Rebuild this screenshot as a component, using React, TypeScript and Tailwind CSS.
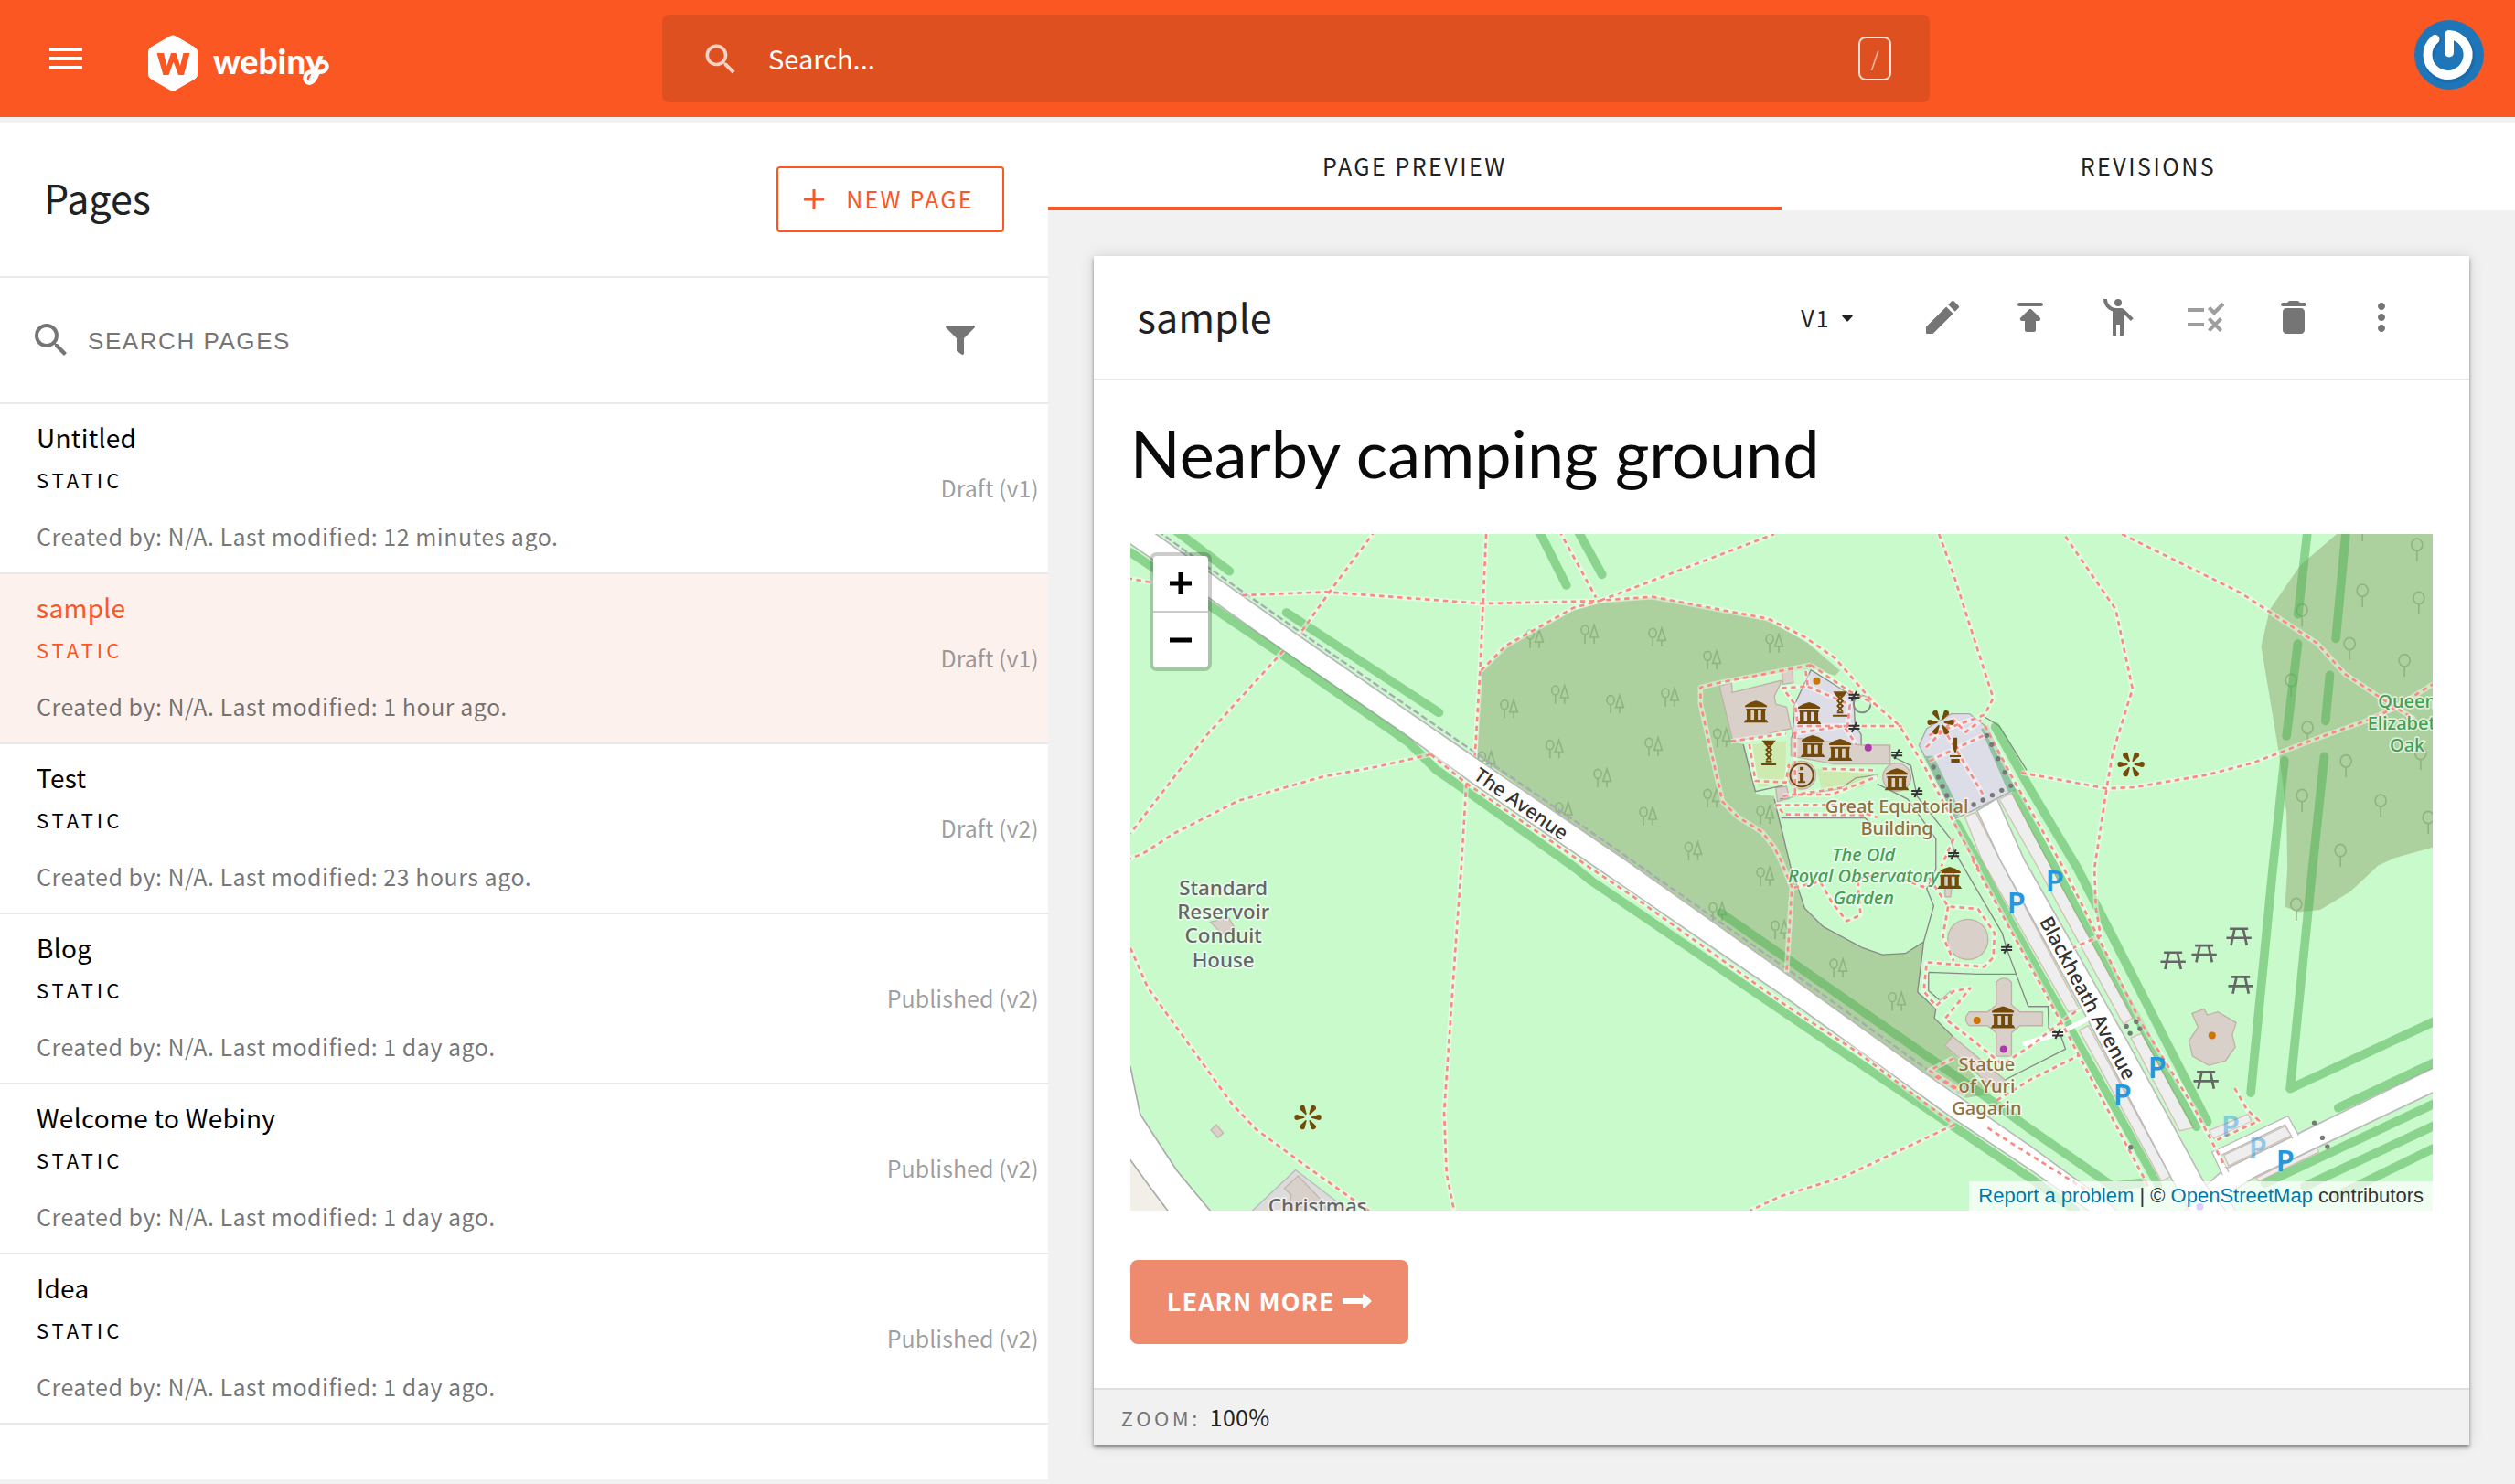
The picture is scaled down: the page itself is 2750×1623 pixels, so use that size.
import React, { useState } from "react";
import { MdMenu, MdSearch, MdEmojiPeople, MdRule, MdMoreVert } from "react-icons/md";
import { FaFilter } from "react-icons/fa";

type Page = { title: string; modified: string; status: string };

const pages: Page[] = [
  { title: "Untitled", modified: "12 minutes ago", status: "Draft (v1)" },
  { title: "sample", modified: "1 hour ago", status: "Draft (v1)" },
  { title: "Test", modified: "23 hours ago", status: "Draft (v2)" },
  { title: "Blog", modified: "1 day ago", status: "Published (v2)" },
  { title: "Welcome to Webiny", modified: "1 day ago", status: "Published (v2)" },
  { title: "Idea", modified: "1 day ago", status: "Published (v2)" },
];

function Logo() {
  return (
    <svg viewBox="0 0 200 64" className="h-16 w-[200px]" role="img" aria-label="webiny">
      <path
        d="M24.500 1.600Q27 .2 29.500 1.600L51 14Q53.500 15.500 53.500 18.500V43.500Q53.500 46.500 51 48L29.500 60.400Q27 61.800 24.500 60.400L3 48Q.5 46.500 .5 43.500V18.500Q.5 15.500 3 14Z"
        fill="#fff"
        stroke="#fff"
      />
      <path d="M9.500 20H17L20.500 34 25 20H30.500L35 34 38.500 20H45.500L39 44H33L27.700 29.500 22.500 44H16.500Z" fill="#fa5723" />
      <text x="71" y="43" fill="#fff" fontSize="37" fontWeight="900" fontFamily="Lato, sans-serif">
        webiny
      </text>
      <path
        d="M183 40.500q-8 -1 -10.500 3.500c-3 6 2 10 6 8 4-2 5-6 7.500-11.500 3 .5 9 0 9.500-6 0-4-4-5.500-7-4.500"
        fill="none"
        stroke="#fff"
        strokeWidth="4.500"
        strokeLinecap="round"
      />
    </svg>
  );
}

function Avatar() {
  return (
    <svg viewBox="0 0 76 76" className="size-[76px]" aria-hidden="true">
      <circle cx="38" cy="38" r="38" fill="#1e76b9" />
      <path d="M22.500 20.500a22.500 22.500 0 1 0 17-5" fill="none" stroke="#15609b" strokeWidth="12" strokeLinecap="round" transform="translate(1 2)" opacity=".5" />
      <path d="M22.500 21a22 22 0 1 0 15.500-5V35.500" fill="none" stroke="#fff" strokeWidth="10" strokeLinecap="round" strokeLinejoin="round" />
    </svg>
  );
}

const roundIcons = {
  edit: "M3 17.460v3.040c0 .28.22.5.5.5h3.040c.13 0 .26-.05.35-.15L17.810 9.940l-3.750-3.750L3.150 17.100c-.1.1-.15.22-.15.36zM20.710 7.040c.39-.39.39-1.020 0-1.410l-2.340-2.340c-.39-.39-1.020-.39-1.410 0l-1.830 1.830 3.750 3.750 1.830-1.830z",
  publish:
    "M5 5c0 .55.45 1 1 1h12c.55 0 1-.45 1-1s-.45-1-1-1H6c-.55 0-1 .45-1 1zm2.410 9H9v5c0 .55.45 1 1 1h4c.55 0 1-.45 1-1v-5h1.590c.89 0 1.340-1.080.71-1.710L12.710 7.700c-.39-.39-1.020-.39-1.410 0l-4.600 4.590c-.63.63-.19 1.710.71 1.710z",
  remove:
    "M6 19c0 1.100.9 2 2 2h8c1.100 0 2-.9 2-2V9c0-1.100-.9-2-2-2H8c-1.100 0-2 .9-2 2v10zM18 4h-2.500l-.71-.71c-.18-.18-.44-.29-.7-.29H9.910c-.26 0-.52.11-.7.29L8.500 4H6c-.55 0-1 .45-1 1s.45 1 1 1h12c.55 0 1-.45 1-1s-.45-1-1-1z",
};

function RoundIcon({ d }: { d: string }) {
  return (
    <svg viewBox="0 0 24 24" className="size-12" fill="currentColor" aria-hidden="true">
      <path d={d} />
    </svg>
  );
}

function ToolButton({ label, faded, children }: { label: string; faded?: boolean; children: React.ReactNode }) {
  return (
    <button aria-label={label} className={faded ? "flex size-24 items-center justify-center text-[#757575] opacity-70" : "flex size-24 items-center justify-center text-[#757575]"}>
      {children}
    </button>
  );
}

/* Footways: pale casing below, red dashes above. */
const footways = [
  "M802-10 662 178 552 333",
  "M502 383 252 658 112 838 0 983",
  "M-10 145 75 160",
  "M367 201 642 190 1152 228 1522 220",
  "M1167 0 1147 448 1130 728",
  "M1407-10 1527 208",
  "M1150 448 1232 366 1452 243 1542 218 1712 206 2092 278 2212 338 2312 408 2442 558 2522 628 2602 758 2702 948 2782 1098",
  "M1542 218 2112 0",
  "M985 723 812 763 632 796 352 876 142 983 42 1048-10 1068",
  "M985 723 1102 818 1512 1098 1650 1190 2152 1548 2382 1698 2702 1938",
  "M1102 818 1085 1098 1067 1348 1029 1898 1037 2098 1062 2220",
  "M0 1358 57 1488 332 1868 412 1953 582 2078 782 2220",
  "M2702 1938 2342 2108 2132 2173 2032 2220",
  "M2652 0 2692 108 2772 358 2830 538 2802 593 2762 608 2620 660",
  "M2232 430 1932 488 1870 503 1870 558 1942 878 1992 928 2072 978 2112 1028 2132 1068 2170 1158 2152 1438",
  "M2232 430 2362 518 2442 558",
  "M3067 8 3232 248 3287 508 3222 718 3202 835 3162 1098 3167 1228 3182 1318 3092 1358",
  "M3252 0 3642 193 3892 358 3982 458 4102 538 4212 608",
  "M2922 783 3202 835 3292 831 3532 790 3682 751 3872 678 4052 613 4142 573 4272 493",
  "M2802 628 2892 798 3062 1098 3312 1598 3492 1888 3592 2078",
  "M2762 1068 2892 1308 3062 1618 3322 2108 3342 2148",
  "M2812 1948 2892 2000 3132 2150",
  "M2177 1160 2262 1140 2302 1210 2350 1270 2395 1250 2385 1130 2480 1110 2600 1158 2610 1140",
  "M2620 1128 2682 1222 2780 1230 2835 1310 2830 1390 2800 1420 2612 1405 2602 1500 2642 1548 2700 1500 2755 1490 2672 1590 2772 1668 2860 1740 2952 1680 3042 1610 3112 1558",
  "M2682 1222 2665 1320 2700 1400",
  "M2842 1858 2952 1790 3112 1710",
  "M2700 1720 2620 1760 2712 1820M2640 1780l100 60",
  "M2170 655 2340 630 2380 690M2180 655l0 200 120 0 150-60",
  "M1970 680 2150 655M2030 690l20 120 100 5 10-60",
  "M2140 915 2120 890 2330 888 2450 930M2150 920 2420 922",
  "M2215 450 2222 500 2140 505 2180 560 2190 630 2530 630",
  "M2222 500 2360 560 2350 650",
  "M2270 770 2440 775M2140 860 2250 845 2350 830",
  "M2610 700 2700 610 2740 650 2790 610M2620 745l180-85M2680 660l120 200",
  "M2700 1000 2660 1090",
  "M3622 1818 3662 1888 3702 1925 3560 1990",
];

const hedges = [
  "M0 60 272 243 502 398 912 683 1002 773 1082 828 1462 1098 1512 1138 2372 1723 2952 2113 3100 2220",
  "M150-10 325 122",
  "M512 258 1012 586",
  "M1335-20 1430 168",
  "M1462-20 1547 133",
  "M1937 1243 2822 1858 2952 1953 3222 2140 3322 2128",
  "M3862-20 3830 263",
  "M3829 360 3792 663",
  "M3785 743 3747 1098 3675 1833",
  "M3988-20 3954 343",
  "M3934 463 3920 613",
  "M3916 730 3877 1098 3804 1820 4300 1588",
  "M3962 1883 4300 1723",
  "M3722 2130 4300 1858",
  "M3852 2140 4300 1930",
  "M3960 2170 4300 2003",
  "M2837 633 2952 838 3107 1098 3532 1928",
];

const grove: [number, number][] = [
  [1326, 330], [1506, 315], [1409, 513], [1242, 560], [1391, 692], [1168, 730], [1421, 897], [1728, 325], [1908, 400], [2112, 345], [1590, 545], [1770, 522], [1716, 685], [1548, 787], [1698, 912],
  [1846, 1027], [2082, 908], [2082, 1110], [1940, 655], [1908, 853], [1926, 1225], [2130, 1285], [2322, 1410], [2514, 1520],
];

const loneTrees: [number, number][] = [
  [4220, 35], [4041, 185], [4226, 210], [3843, 250], [3999, 360], [4179, 415], [3807, 480], [3861, 635], [3987, 745], [3843, 858], [4101, 875], [4257, 930], [3969, 1038], [4041, -30], [4232, 720], [3824, 1215],
];

const museums: [number, number][] = [[2052, 585], [2226, 590], [2238, 698], [2328, 710], [2514, 807], [2687, 1130], [2862, 1587]];
const picnics: [number, number][] = [[3420, 1398], [3522, 1375], [3636, 1320], [3642, 1478], [3528, 1790]];
const gates: [number, number][] = [[2374, 532], [2374, 634], [2514, 722], [2580, 848], [2700, 1052], [2874, 1360], [3042, 1640]];
const bollards: [number, number][] = [
  [2634, 765], [2650, 798], [2664, 828], [2678, 858], [2766, 888], [2796, 873], [2827, 857], [2858, 841], [2888, 826], [2868, 782], [2846, 737], [2825, 691], [2809, 661],
  [3267, 1615], [3299, 1600], [3311, 1623], [3279, 1638], [3281, 2012], [3883, 1932], [3910, 1981], [3926, 2010],
];

function MapLabel({ x, y, lines, size, step, fill, italic }: { x: number; y: number; lines: string[]; size: number; step: number; fill: string; italic?: boolean }) {
  return (
    <text
      fontFamily="'Noto Sans', sans-serif"
      fontSize={size}
      fontStyle={italic ? "italic" : "normal"}
      fontWeight="500"
      fill={fill}
      stroke="#fff"
      strokeOpacity=".6"
      strokeWidth="10"
      strokeLinejoin="round"
      paintOrder="stroke"
      textAnchor="middle"
    >
      {lines.map((line, i) => (
        <tspan key={line} x={x} y={y + i * step}>
          {line}
        </tspan>
      ))}
    </text>
  );
}

function ParkMap() {
  return (
    <svg viewBox="0 0 4272 2220" className="block h-auto w-full" role="img" aria-label="Map of the park around the Royal Observatory">
      <defs>
        <g id="round-tree" fill="none" stroke="#8fb481" strokeWidth="5">
          <ellipse cx="0" cy="0" rx="18" ry="20" />
          <path d="M0 20V54" />
        </g>
        <g id="tree-pair" fill="none" stroke="#8fb481" strokeWidth="5">
          <ellipse cx="-15" cy="0" rx="12" ry="15" />
          <path d="M-15 15V44M15-16 2 24H28ZM15 24V44" />
        </g>
        <g id="museum" fill="#734a08">
          <path d="M-36-22Q-20-34 0-38 20-34 36-22V-17H-36ZM-32-12H32V-6H-32ZM-30-6H-17V26H-30ZM-6-6H6V26H-6ZM17-6H30V26H17ZM-34 24H34L40 34H-40Z" />
        </g>
        <g id="picnic" fill="none" stroke="#666" strokeWidth="8">
          <path d="M-30-25H30M-41 5H41M-14-25-26 30M14-25 26 30" />
        </g>
        <g id="gate" fill="none" stroke="#333" strokeWidth="6">
          <path d="M-18-5H18M-18 5H18M-8 16 8-16" />
        </g>
        <g id="artwork" fill="#734a08">
          <path id="petal" d="M11-2 36-9Q44-9 44 0 44 9 36 9L11 2Z" />
          <use href="#petal" transform="rotate(60)" />
          <use href="#petal" transform="rotate(120)" />
          <use href="#petal" transform="rotate(180)" />
          <use href="#petal" transform="rotate(240)" />
          <use href="#petal" transform="rotate(300)" />
        </g>
        <g id="telescope" fill="none" stroke="#734a08" strokeWidth="6">
          <path d="M-17-38H17L10-28H-10ZM-10 28H10" fill="#734a08" />
          <path d="M-8-26 8-10-8 6 8 24M8-26-8-10 8 6-8 24M-24 38H24" />
        </g>
      </defs>

      <rect width="4272" height="2220" fill="#c8facc" />

      {/* Woodland */}
      <path
        d="M1150 453 1232 368 1452 250 1542 226 1722 206 2092 283 2222 358 2327 448 2312 465 2232 440 1932 488 1977 680 2012 690 2052 853 2112 860 2167 1098 2192 1168 2212 1228 2272 1288 2402 1358 2467 1380 2542 1376 2602 1338 2582 1503 2642 1558 2637 1588 2697 1648 2672 1678 2742 1748 2822 1838 2740 1850 2612 1773 2152 1443 1542 1018 1137 728Z"
        fill="#add19e"
      />
      <path d="M3957 0 3837 103 3737 248 3709 368 3767 718 3792 918 3795 1098 3787 1223 3832 1240 3902 1233 4002 1173 4092 1088 4147 1063 4272 1028V0Z" fill="#add19e" />
      {grove.map(([x, y]) => (
        <use key={`${x}-${y}`} href="#tree-pair" x={x} y={y} />
      ))}
      {loneTrees.map(([x, y]) => (
        <use key={`${x}-${y}`} href="#round-tree" x={x} y={y} />
      ))}

      {/* South-west corner */}
      <path d="M0 1748 32 1903 152 2088 270 2230H-10V1748Z" fill="#fff" stroke="#aaa" strokeWidth="5" />
      <path d="M-10 2040 72 2153 130 2230H-10Z" fill="#f2efe9" stroke="#aaa" strokeWidth="5" />
      <path d="M542 2086 722 2225H395Z" fill="#dcdcdc" stroke="#bbb" strokeWidth="4" />
      <path d="M550 2106 640 2200V2225H520L527 2168 505 2146ZM262 1273 322 1258 342 1293 302 1313ZM282 1938 305 1965 287 1981 264 1956Z" fill="#d9d0c9" stroke="#c4b6ab" strokeWidth="4" />

      {/* Courtyards and lawns */}
      <path d="M2177 563 2232 446 2372 533 2377 628 2397 658V693H2167L2177 600Z" fill="#dddde8" stroke="#8a8a8a" strokeWidth="4" />
      <path d="M2587 693 2612 638 2692 590H2752L2802 628 2902 838 2762 908 2707 933Z" fill="#dddde8" stroke="#aaa" strokeWidth="4" />
      <path d="M2602 728H2634L2724 915 2707 933ZM2790 640 2812 628 2905 840 2880 848Z" fill="#8fc3a1" />
      <path d="M2040 690 2150 680 2150 820 2060 830ZM2250 770 2440 790 2400 830 2270 850Z" fill="#cdebb0" />

      {/* Buildings */}
      <g fill="#d9d0c9" stroke="#c1b2a6" strokeWidth="4">
        <path d="M1932 498 1972 488 1974 520 2137 480 2112 533 2117 558 2152 568 2167 638 1977 683ZM2137 453 2172 448 2174 488 2140 493ZM2167 668 2397 693H2492V755H2307L2167 728ZM2117 833 2152 828 2162 868 2122 878Z" />
        <circle cx="2514" cy="798" r="46" />
        <circle cx="2202" cy="791" r="46" />
        <circle cx="2747" cy="1330" r="66" />
        <path d="M2672 1110H2702L2690 1190H2672Z" />
        <path d="M2840 1470Q2865 1445 2890 1470V1545L2918 1568H2992V1613H2918L2890 1636V1713H2840V1636L2812 1613H2752Q2728 1590 2752 1568H2812L2840 1545Z" />
        <path d="M2697 1648 2672 1678 2842 1828 2870 1792Z" />
        <path d="M3482 1573 3522 1558 3532 1578 3567 1568 3627 1603 3614 1643 3624 1683 3592 1728 3537 1743 3484 1713 3472 1663 3502 1618Z" />
      </g>

      {/* Fences and walls */}
      <g fill="none" stroke="#888" strokeWidth="4">
        <path d="M2010 690 2050 845 2140 825M2112 870 2167 1098 2192 1168 2212 1228 2272 1288 2402 1358 2467 1380 2542 1376 2602 1338 2635 1220 2612 1165 2642 1100V1000L2550 870 2450 820" />
        <path d="M2602 1338 2582 1503 2642 1558 2637 1588 2697 1648M2618 1438 2780 1444H2905M2618 1438V1498L2655 1530 2692 1498M2135 932H2410L2430 950" />
        <path d="M2500 730 2560 760 2580 860 2690 1000 2702 1040 2860 1310 2874 1360 2945 1550H3010L3012 1620 3050 1640 3067 1690 2870 1790" />
        <path d="M2802 600 2850 630 2940 775" />
      </g>
      <path d="M2130 870 2330 835 2380 800 2450 790" fill="none" stroke="#999" strokeWidth="4" />
      <circle cx="2400" cy="558" r="28" fill="none" stroke="#888" strokeWidth="6" />

      {/* Parking strips */}
      <g fill="#eee" stroke="#d5bfb8" strokeWidth="4">
        <path d="M2850 870 2890 850 3007 1068 3287 1588 3257 1608 2962 1068ZM3282 1653 3317 1638 3487 1948 3442 1958Z" />
        <path d="M2737 928 2772 913 2852 1068 3112 1558 3077 1568 2792 1068ZM3112 1628 3142 1613 3412 2108 3382 2123Z" />
        <path d="M3537 1958 3667 1903 3677 1928 3552 1983ZM3692 2113 3892 2013 3897 2028 3702 2123Z" />
      </g>

      {/* Hedges beside Blackheath Avenue */}
      <g fill="none" stroke="#4bae4f" strokeOpacity=".5" strokeWidth="26" strokeLinecap="round">
        <path d="M2712 950 2800 1110 2892 1280 3372 2138" />
        <path d="M2905 850 2992 1018 3497 1946" />
      </g>

      {/* Roads */}
      <path d="M3512 2153 3582 2088 4290 1744V1824L3692 2108 3592 2168 3632 2230H3452Z" fill="#fff" stroke="#bbb" strokeWidth="5" />
      <path d="M2777 908 2842 868 2932 1068 3272 1668 3522 2128 3600 2230H3480L3422 2128 3132 1578 2852 1068Z" fill="#fff" stroke="#bbb" strokeWidth="5" />
      <path d="M3592 2098 3562 2033 3792 1924 3822 1978" fill="none" stroke="#bbb" strokeWidth="26" />
      <path d="M3594 2102 3562 2033 3792 1924 3824 1982" fill="none" stroke="#fff" strokeWidth="18" />
      <path d="M3587 2038 3787 1943 3807 1973 3602 2073Z" fill="#eee" stroke="#d5bfb8" strokeWidth="4" />
      <path d="M3140 1590 3042 1640 2935 1672" fill="none" stroke="#fff" strokeWidth="16" strokeLinecap="round" />
      <path
        d="M-10 26 262 213 502 383 902 658 1122 818 1522 1091 2152 1523 2692 1913 2952 2086 3150 2225H3240L3212 2198 2952 2008 2612 1773 2152 1443 1622 1068 1542 1014 1112 720 832 528 552 333 262 128 70-10H-10Z"
        fill="#fff"
        stroke="#b8b8b8"
        strokeWidth="5"
      />
      <path d="M90-10 270 120 552 318 838 516 1118 708 1548 1003 2158 1430 2618 1760 2720 1835" fill="none" stroke="#a9a9b4" strokeWidth="7" strokeDasharray="22 10" />

      <g fill="none" stroke="#4bae4f" strokeOpacity=".5" strokeWidth="29" strokeLinecap="round" strokeLinejoin="round">
        {hedges.map((d) => (
          <path key={d} d={d} />
        ))}
      </g>

      <g fill="none" stroke="#fff" strokeOpacity=".45" strokeWidth="17" strokeLinejoin="round">
        {footways.map((d) => (
          <path key={d} d={d} />
        ))}
      </g>
      <g fill="none" stroke="#fa8b80" strokeWidth="8" strokeLinejoin="round" strokeDasharray="16 14">
        {footways.map((d) => (
          <path key={d} d={d} />
        ))}
      </g>

      {/* Points of interest */}
      {museums.map(([x, y]) => (
        <use key={`${x}-${y}`} href="#museum" x={x} y={y} />
      ))}
      {picnics.map(([x, y]) => (
        <use key={`${x}-${y}`} href="#picnic" x={x} y={y} />
      ))}
      {gates.map(([x, y]) => (
        <use key={`${x}-${y}`} href="#gate" x={x} y={y} />
      ))}
      {bollards.map(([x, y]) => (
        <circle key={`${x}-${y}`} cx={x} cy={y} r="8" fill="#777" />
      ))}
      <use href="#artwork" x="582" y="1914" />
      <use href="#artwork" x="3282" y="756" />
      <use href="#artwork" x="2658" y="618" />
      <use href="#telescope" x="2328" y="558" />
      <use href="#telescope" x="2094" y="718" />
      <path d="M2700 668H2712V700L2708 716H2703L2698 700ZM2688 726H2724V732H2688ZM2692 738H2720V750H2692Z" fill="#734a08" />
      <circle cx="2202" cy="791" r="38" fill="none" stroke="#734a08" strokeWidth="6" />
      <path d="M2196 764h12v11h-12ZM2192 783h16v28h6v6h-24v-6h6v-22h-4Z" fill="#734a08" />
      <circle cx="2251" cy="482" r="12" fill="#cc7300" />
      <circle cx="2777" cy="1596" r="12" fill="#cc7300" />
      <circle cx="3548" cy="1645" r="12" fill="#cc7300" />
      <circle cx="2420" cy="701" r="12" fill="#ac39ac" />
      <circle cx="2864" cy="1690" r="12" fill="#ac39ac" />
      <circle cx="3508" cy="2207" r="12" fill="#8461ff" />

      <g fontFamily="'Noto Sans', sans-serif" fontSize="98" fontWeight="600" fill="#2498dd" textAnchor="middle">
        <text x="3032" y="1173">P</text>
        <text x="2906" y="1245">P</text>
        <text x="3368" y="1785">P</text>
        <text x="3254" y="1875">P</text>
        <text x="3788" y="2091">P</text>
        <text x="3608" y="1977" fillOpacity=".45">P</text>
        <text x="3698" y="2050" fillOpacity=".45">P</text>
      </g>

      {/* Labels */}
      <MapLabel x={305} y={1184} lines={["Standard", "Reservoir", "Conduit", "House"]} size={67} step={79} fill="#666" />
      <MapLabel x={614} y={2228} lines={["Christmas"]} size={67} step={79} fill="#666" />
      <MapLabel x={2514} y={915} lines={["Great Equatorial", "Building"]} size={60} step={72} fill="#94703b" />
      <MapLabel x={2809} y={1760} lines={["Statue", "of Yuri", "Gagarin"]} size={60} step={72} fill="#94703b" />
      <MapLabel x={2405} y={1073} lines={["The Old", "Royal Observatory", "Garden"]} size={60} step={71} fill="#43a055" italic />
      <MapLabel x={4188} y={570} lines={["Queen", "Elizabeth", "Oak"]} size={60} step={72} fill="#43a055" />
      <g fontFamily="'Noto Sans', sans-serif" fill="#333" fontWeight="500">
        <text transform="translate(1122 801) rotate(35)" fontSize="64">
          The Avenue
        </text>
        <text transform="translate(2980 1270) rotate(62)" fontSize="65">
          Blackheath Avenue
        </text>
      </g>
    </svg>
  );
}

function ZoomGlyph({ plus }: { plus?: boolean }) {
  return (
    <svg viewBox="0 0 24 24" className="size-6" stroke="#000" strokeWidth="5" aria-hidden="true">
      <path d={plus ? "M0 12H24M12 0V24" : "M0 12H24"} />
    </svg>
  );
}

export default function App() {
  const [selected, setSelected] = useState("sample");
  const [tab, setTab] = useState("Page preview");

  return (
    <div className="flex min-h-screen flex-col bg-[#f1f1f1] font-['Noto_Sans_CJK_SC',sans-serif] text-[#212121]">
      <header className="flex h-32 items-center bg-[#fa5723] text-white">
        <div className="flex w-[26.33%] items-center pl-12">
          <button aria-label="Open menu" className="mr-[66px]">
            <MdMenu className="size-12" />
          </button>
          <a href="#home" aria-label="Webiny home" className="mt-3">
            <Logo />
          </a>
        </div>
        <label className="flex h-24 w-[50.4%] items-center rounded-lg bg-[#df5020] pr-[42px] pl-[42px]">
          <MdSearch className="mt-0.5 size-11 text-white/75" />
          <input aria-label="Search" placeholder="Search..." className="ml-[30px] h-16 min-w-0 flex-1 bg-transparent pb-0.5 text-[29px] outline-none placeholder:text-white" />
          <kbd className="flex h-12 w-9 items-center justify-center rounded-lg border-2 border-white/80 pb-0.5 font-['Noto_Sans_CJK_SC',sans-serif] text-[22px] font-light text-white/80">/</kbd>
        </label>
        <button aria-label="Account" className="mr-[34px] mb-2 ml-auto">
          <Avatar />
        </button>
      </header>

      <main className="grid flex-1 grid-cols-12 pt-1.5">
        <section className="col-span-5 mb-[5px] bg-white">
          <div className="flex h-[170px] items-center justify-between border-b-2 border-[#e9e9e9] px-12">
            <h1 className="pb-1.5 text-[43px] leading-none">Pages</h1>
            <button className="flex h-[72px] items-center rounded border-2 border-[#fa5723] pr-[31px] pl-7 text-[25px] tracking-[0.09em] text-[#fa5723] uppercase">
              <svg viewBox="0 0 22 22" className="mr-6 size-[22px]" stroke="currentColor" strokeWidth="3" aria-hidden="true">
                <path d="M0 11H22M11 0V22" />
              </svg>
              New page
            </button>
          </div>
          <div className="flex h-[138px] items-center border-b-2 border-[#e9e9e9] pr-20 pl-8">
            <MdSearch className="size-12 text-[#757575]" />
            <input
              aria-label="Search pages"
              placeholder="SEARCH PAGES"
              className="ml-4 min-w-0 flex-1 bg-transparent pt-0.5 font-['Liberation_Sans',sans-serif] text-[26px] tracking-[0.06em] outline-none placeholder:text-[#757575]"
            />
            <button aria-label="Filter">
              <FaFilter className="size-8 text-[#757575]" />
            </button>
          </div>
          <ul>
            {pages.map((page) => {
              const active = page.title === selected;
              return (
                <li key={page.title} className="border-b-2 border-[#e9e9e9]">
                  <button onClick={() => setSelected(page.title)} className={active ? "flex w-full items-center bg-[#fdf1ed] pr-2.5 pl-10 text-left" : "flex w-full items-center pr-2.5 pl-10 text-left"}>
                    <span className="flex-1 pt-4 pb-6">
                      <span className={active ? "block text-[#fa5723]" : "block text-black"}>
                        <span className="block text-[28px] leading-10 tracking-[0.01em]">{page.title}</span>
                        <span className="mt-2.5 block text-[22px] leading-8 tracking-[0.18em]">STATIC</span>
                      </span>
                      <span className="mt-[30px] block text-[25px] leading-8 tracking-[0.02em] text-black/55">Created by: N/A. Last modified: {page.modified}.</span>
                    </span>
                    <span className="pb-0.5 text-[25px] leading-8 text-black/40">{page.status}</span>
                  </button>
                </li>
              );
            })}
          </ul>
        </section>

        <section className="col-span-7">
          <div role="tablist" className="flex bg-white">
            {["Page preview", "Revisions"].map((name) => (
              <button
                key={name}
                role="tab"
                aria-selected={tab === name}
                onClick={() => setTab(name)}
                className={
                  tab === name
                    ? "h-24 flex-1 border-b-4 border-[#fa5723] pt-1 text-[25px] tracking-[0.1em] uppercase"
                    : "h-24 flex-1 border-b-4 border-white pt-1 text-[25px] tracking-[0.1em] uppercase"
                }
              >
                {name}
              </button>
            ))}
          </div>

          <article className="mx-[50px] mt-[50px] mb-8 bg-white shadow-[0_3px_4px_rgba(0,0,0,0.4),0_0_16px_rgba(0,0,0,0.12)]">
            <div className="flex h-[136px] items-center border-b-2 border-[#e9e9e9] pr-12 pl-12">
              <h2 className="flex-1 pb-1 text-[43px] leading-none">sample</h2>
              <button className="mr-[50px] flex items-center pt-0.5 text-[25px] tracking-[0.09em]">
                V1
                <svg viewBox="0 0 12 8" className="ml-3 h-2 w-3" fill="currentColor" aria-hidden="true">
                  <path d="M1.500 0H10.500Q12.500 .5 11.500 2L7 7Q6 8 5 7L.5 2Q-.5 .5 1.500 0Z" />
                </svg>
              </button>
              <ToolButton label="Edit">
                <RoundIcon d={roundIcons.edit} />
              </ToolButton>
              <ToolButton label="Publish">
                <RoundIcon d={roundIcons.publish} />
              </ToolButton>
              <ToolButton label="Request review">
                <MdEmojiPeople className="size-12" />
              </ToolButton>
              <ToolButton label="Request changes" faded>
                <MdRule className="size-12" />
              </ToolButton>
              <ToolButton label="Delete">
                <RoundIcon d={roundIcons.remove} />
              </ToolButton>
              <ToolButton label="More options">
                <MdMoreVert className="size-12" />
              </ToolButton>
            </div>

            <div className="px-10 pt-[35px] pb-12">
              <h3 className="mb-[45px] font-['Lato',sans-serif] text-[72px] leading-[88px] text-[#0a0a0a]">Nearby camping ground</h3>
              <div className="relative overflow-hidden">
                <ParkMap />
                <div className="absolute top-5 left-[21px] flex flex-col overflow-hidden rounded-lg border-4 border-black/20 bg-white bg-clip-padding">
                  <button aria-label="Zoom in" className="flex h-[62px] w-[60px] items-center justify-center border-b-2 border-[#ccc]">
                    <ZoomGlyph plus />
                  </button>
                  <button aria-label="Zoom out" className="flex h-[60px] w-[60px] items-center justify-center">
                    <ZoomGlyph />
                  </button>
                </div>
                <p className="absolute right-0 bottom-0 bg-white/70 px-2.5 font-['Liberation_Sans',sans-serif] text-[22px] leading-8 text-[#333]">
                  <a href="#report" className="text-[#0078a8]">
                    Report a problem
                  </a>{" "}
                  | ©{" "}
                  <a href="#osm" className="text-[#0078a8]">
                    OpenStreetMap
                  </a>{" "}
                  contributors
                </p>
              </div>
              <button className="mt-[54px] flex h-[92px] items-center rounded-lg bg-[#ee8a6d] px-10 pb-0.5 text-[27px] font-bold tracking-[0.04em] text-white">
                LEARN MORE
                <svg viewBox="0 0 32 16" className="ml-2 h-4 w-8" fill="currentColor" aria-hidden="true">
                  <path d="M0 5H22V2Q22-1 24.500 1L31 7Q32 8 31 9L24.500 15Q22 17 22 14V11H0Z" />
                </svg>
              </button>
            </div>

            <footer className="flex h-[62px] items-center border-t-2 border-[#dfdfdf] bg-[#f1f1f1] pl-[30px]">
              <span className="text-[22px] tracking-[0.16em] text-[#757575]">ZOOM:</span>
              <span className="ml-2.5 text-[25px] tracking-[0.01em]">100%</span>
            </footer>
          </article>
        </section>
      </main>
    </div>
  );
}
